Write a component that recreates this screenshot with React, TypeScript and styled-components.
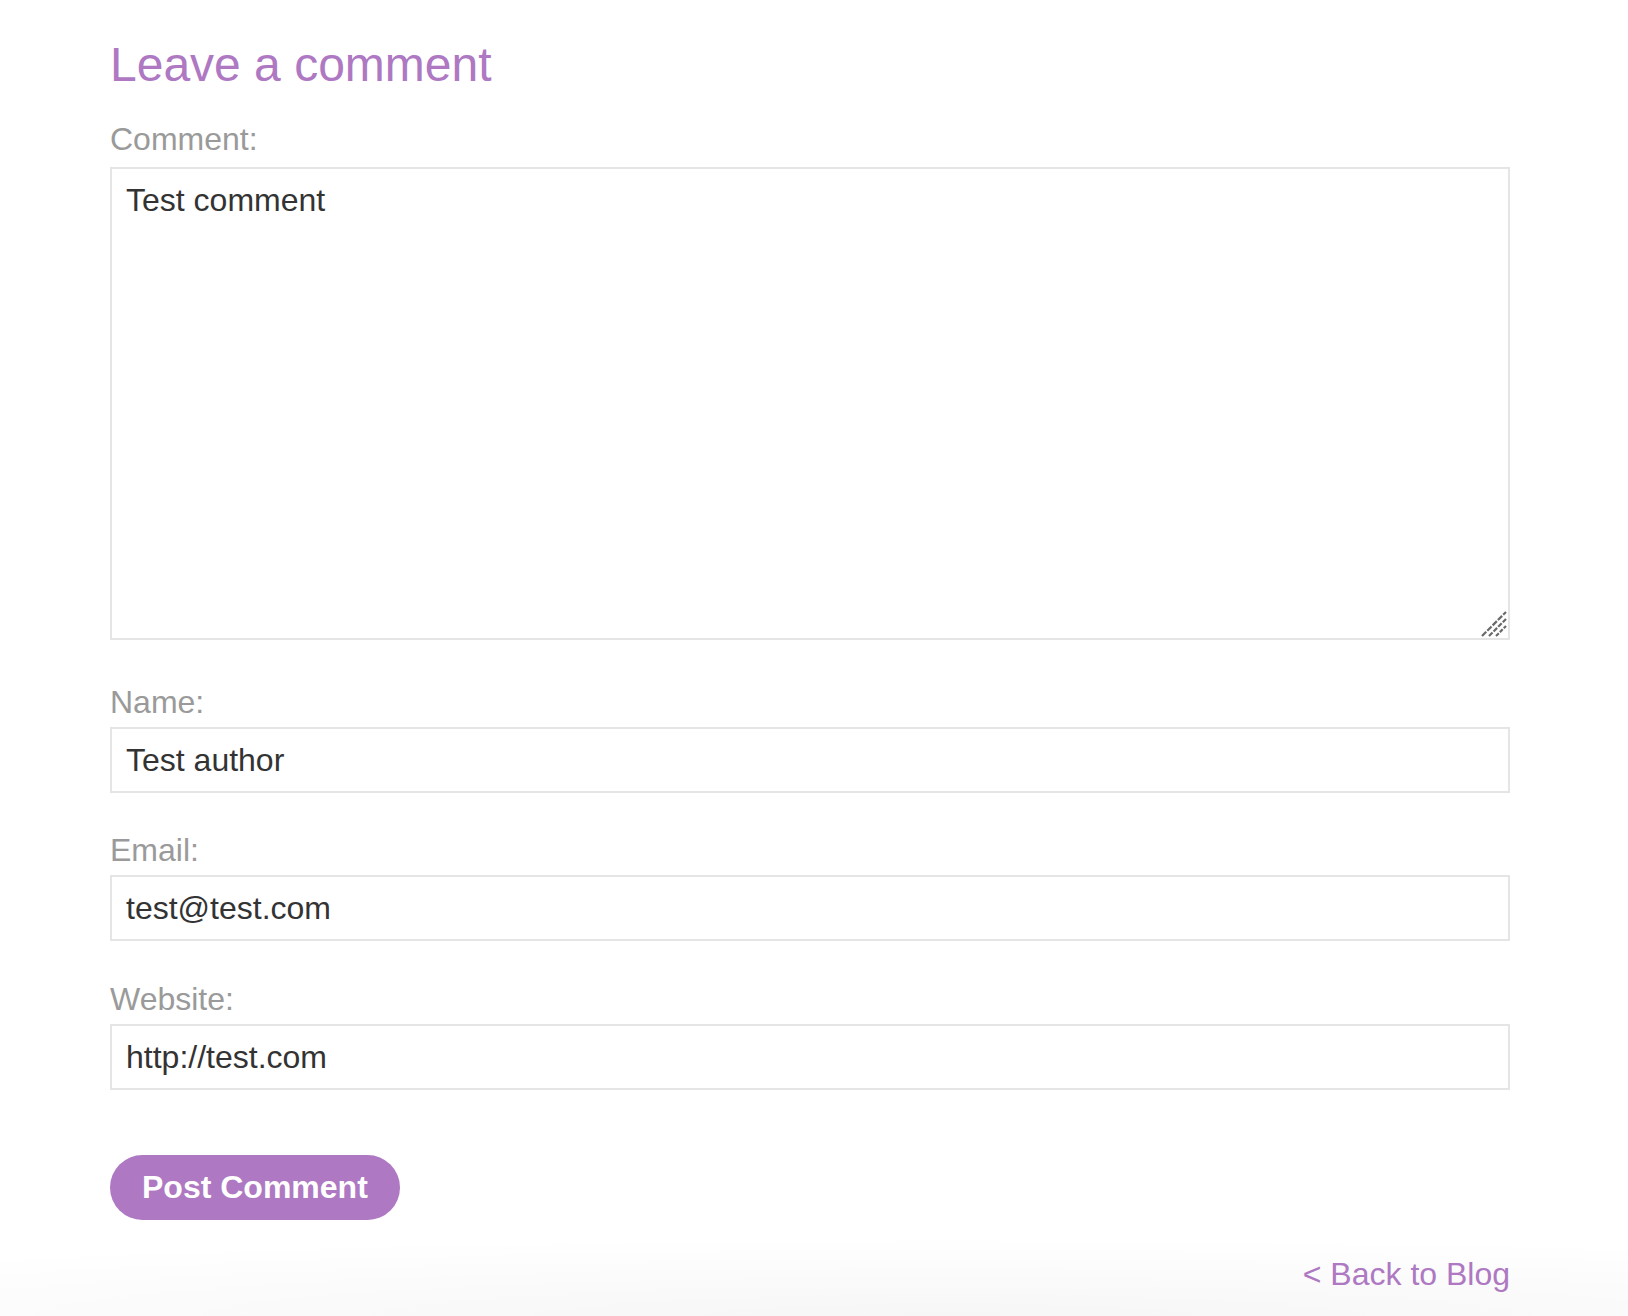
import React from 'react'
import styled, { createGlobalStyle } from 'styled-components'

const purple = '#ae78c2'

const GlobalStyle = createGlobalStyle`
  html, body {
    margin: 0;
    padding: 0;
    background: #fff;
    overflow: hidden;
  }
  body {
    font-family: 'Liberation Sans', Arial, Helvetica, sans-serif;
  }
`

const Page = styled.div`
  min-height: 100vh;
  box-sizing: border-box;
  padding: 37px 0 0 110px;
  background: radial-gradient(
      ellipse 1500px 80px at 950px 100%,
      rgba(0, 0, 0, 0.035),
      rgba(0, 0, 0, 0) 100%
    )
    no-repeat;
`

const Form = styled.form`
  width: 1400px;
  display: flex;
  flex-direction: column;
`

const Heading = styled.h2`
  margin: 0;
  font-size: 48px;
  line-height: 55px;
  font-weight: normal;
  color: ${purple};
`

const Field = styled.div<{ spaceAbove: number; gap: number }>`
  display: flex;
  flex-direction: column;
  gap: ${({ gap }) => gap}px;
  margin-top: ${({ spaceAbove }) => spaceAbove}px;
`

const Label = styled.label`
  font-size: 32px;
  line-height: 36px;
  color: #9a9a9a;
`

const Input = styled.input`
  box-sizing: border-box;
  width: 100%;
  height: 66px;
  margin: 0;
  padding: 13px 14px;
  border: 2px solid #e5e5e5;
  border-radius: 0;
  outline: none;
  font-family: inherit;
  font-size: 32px;
  line-height: 36px;
  color: #333;
  background: #fff;
`

const TextAreaWrap = styled.div`
  position: relative;
  height: 473px;
`

const TextArea = styled.textarea`
  display: block;
  box-sizing: border-box;
  width: 100%;
  height: 100%;
  margin: 0;
  padding: 13px 14px;
  border: 2px solid #e5e5e5;
  border-radius: 0;
  outline: none;
  resize: none;
  font-family: inherit;
  font-size: 32px;
  line-height: 36px;
  color: #333;
  background: #fff;
`

// drawn resize grip, sits over the textarea's bottom-right corner
const Grip = styled.svg`
  position: absolute;
  right: 3px;
  bottom: 3px;
  width: 26px;
  height: 26px;
  pointer-events: none;
`

const Actions = styled.div`
  margin-top: 65px;
`

const SubmitButton = styled.button`
  height: 65px;
  padding: 0 32px;
  border: none;
  border-radius: 33px;
  background: ${purple};
  color: #fff;
  font-family: inherit;
  font-size: 32px;
  font-weight: bold;
  cursor: pointer;
`

const BackLink = styled.a`
  align-self: flex-end;
  margin-top: 36px;
  font-size: 32px;
  line-height: 36px;
  color: ${purple};
  text-decoration: none;
`

const fields = [
  { id: 'name', label: 'Name:', value: 'Test author', space: 44 },
  { id: 'email', label: 'Email:', value: 'test@test.com', space: 39 },
  { id: 'website', label: 'Website:', value: 'http://test.com', space: 40 },
]

const App: React.FC = () => {
  return (
    <Page>
      <GlobalStyle />
      <Form onSubmit={e => e.preventDefault()}>
        <Heading>Leave a comment</Heading>
        <Field spaceAbove={29} gap={10}>
          <Label htmlFor="comment">Comment:</Label>
          <TextAreaWrap>
            <TextArea id="comment" defaultValue="Test comment" />
            <Grip viewBox="0 0 26 26">
              <g stroke="#6a6a6a" strokeWidth="2.2" strokeLinecap="butt">
                <line x1="1" y1="25" x2="25" y2="1" strokeDasharray="6 1.5" />
                <line x1="8" y1="25" x2="25" y2="8" strokeDasharray="5 1.5" />
                <line x1="15" y1="25" x2="25" y2="15" strokeDasharray="4 1.5" />
              </g>
            </Grip>
          </TextAreaWrap>
        </Field>
        {fields.map(f => (
          <Field key={f.id} spaceAbove={f.space} gap={7}>
            <Label htmlFor={f.id}>{f.label}</Label>
            <Input id={f.id} defaultValue={f.value} />
          </Field>
        ))}
        <Actions>
          <SubmitButton type="submit">Post Comment</SubmitButton>
        </Actions>
        <BackLink href="#">&lt; Back to Blog</BackLink>
      </Form>
    </Page>
  )
}

export default App
